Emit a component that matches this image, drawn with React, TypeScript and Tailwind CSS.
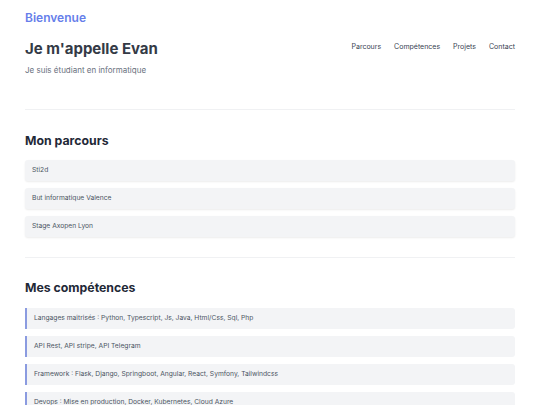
import React from "react";

const parcours = ["Sti2d", "But informatique Valence", "Stage Axopen Lyon"];

const competences = [
  "Langages maitrisés : Python, Typescript, Js, Java, Html/Css, Sql, Php",
  "API Rest, API stripe, API Telegram",
  "Framework : Flask, Django, Springboot, Angular, React, Symfony, Tailwindcss",
  "Devops : Mise en production, Docker, Kubernetes, Cloud Azure",
];

export default function App() {
  return (
    <div className="min-h-screen bg-white px-[25px] font-['Inter',sans-serif]">
      <header className="pt-[10px] pb-[33px] border-b border-[#f0f1f3]">
        <p className="text-[12px] leading-[16px] font-semibold text-[#667eea]">Bienvenue</p>
        <div className="mt-[12px] flex items-start justify-between">
          <div>
            <h1 className="text-[15px] leading-[22px] font-bold text-[#343a46]">Je m'appelle Evan</h1>
            <p className="mt-[4px] text-[8px] leading-[12px] text-[#6b7280]">Je suis étudiant en informatique</p>
          </div>
          <nav className="mt-[3px] flex gap-[13px] text-[7px] leading-[12px] text-[#374151]">
            <span>Parcours</span>
            <span>Compétences</span>
            <span>Projets</span>
            <span>Contact</span>
          </nav>
        </div>
      </header>

      <section className="pt-[23px] pb-[20px] border-b border-[#f0f1f3]">
        <h2 className="text-[12.3px] leading-[16px] font-bold text-[#1f2937]">Mon parcours</h2>
        <ul className="mt-[11px] flex flex-col gap-[7px]">
          {parcours.map((p) => (
            <li
              key={p}
              className="h-[21px] flex items-center px-[7px] rounded-[3px] bg-[#f3f4f6] shadow-[0_1px_2px_rgba(0,0,0,0.08)] text-[6.7px] text-[#4b5563]"
            >
              {p}
            </li>
          ))}
        </ul>
      </section>

      <section className="pt-[22px] pb-[20px]">
        <h2 className="text-[12.3px] leading-[16px] font-bold text-[#1f2937]">Mes compétences</h2>
        <ul className="mt-[12px] flex flex-col gap-[7px]">
          {competences.map((c) => (
            <li
              key={c}
              className="h-[21px] flex items-center pl-[7px] rounded-r-[3px] border-l-2 border-[#8b9be0] bg-[#f3f4f6] text-[6.7px] text-[#4b5563]"
            >
              {c}
            </li>
          ))}
        </ul>
      </section>
    </div>
  );
}
